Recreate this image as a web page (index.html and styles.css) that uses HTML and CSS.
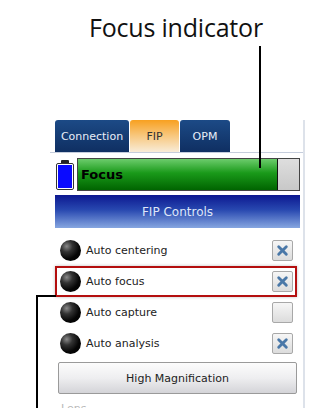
FILE: index.html
```html
<!DOCTYPE html>
<html lang="en">
<head>
    <meta charset="UTF-8">
    <title>Focus indicator</title>
    <link rel="stylesheet" href="styles.css">
</head>
<body>

<div class="page">
    <!-- Callout title -->
    <div class="caption">Focus indicator</div>

    <!-- Callout lines -->
    <div class="lead lead-focus"></div>
    <div class="lead lead-row-h"></div>
    <div class="lead lead-row-v"></div>

    <div class="frame">
        <div class="tabs">
            <div class="tab tab-conn">Connection</div>
            <div class="tab tab-fip active">FIP</div>
            <div class="tab tab-opm">OPM</div>
        </div>

        <div class="status">
            <div class="battery"><div class="battery-fill"></div></div>
            <div class="focus-bar">
                <div class="focus-level">Focus</div>
                <div class="focus-rest"></div>
            </div>
        </div>

        <div class="section-head">FIP Controls</div>

        <div class="controls">
            <div class="row">
                <span class="ball"></span>
                <span class="label">Auto centering</span>
                <span class="check on"><svg viewBox="0 0 20 20"><path d="M6 6L14 14M14 6L6 14"/></svg></span>
            </div>
            <div class="row selected">
                <span class="ball"></span>
                <span class="label">Auto focus</span>
                <span class="check on"><svg viewBox="0 0 20 20"><path d="M6 6L14 14M14 6L6 14"/></svg></span>
            </div>
            <div class="row">
                <span class="ball"></span>
                <span class="label">Auto capture</span>
                <span class="check"></span>
            </div>
            <div class="row">
                <span class="ball"></span>
                <span class="label">Auto analysis</span>
                <span class="check on"><svg viewBox="0 0 20 20"><path d="M6 6L14 14M14 6L6 14"/></svg></span>
            </div>
            <div class="button">High Magnification</div>
            <div class="faded">Lens</div>
        </div>
    </div>
</div>

</body>
</html>
```

FILE: styles.css
```css
body {
    margin: 0;
    background-color: #ffffff;
    overflow: hidden;
}

.page {
    position: relative;
    width: 309px;
    height: 408px;
    overflow: hidden;
}

.caption {
    font-family: 'Open Sans', sans-serif;
    font-size: 25px;
    line-height: 30px;
    color: #111111;
    padding-top: 12px;
    margin-left: 89px;
    height: 108px;
    letter-spacing: -0.2px;
}

/* callout leader lines */
.lead {
    position: absolute;
    background-color: #000000;
    z-index: 5;
}

.lead-focus {
    left: 259px;
    top: 46px;
    width: 2px;
    height: 122px;
}

.lead-row-h {
    left: 36px;
    top: 295px;
    width: 20px;
    height: 2px;
}

.lead-row-v {
    left: 36px;
    top: 295px;
    width: 2px;
    height: 120px;
}

.frame {
    margin-left: 55px;
    width: 245px;
    padding-right: 3px;
    border-right: 2px solid #dde2ea;
    height: 300px;
    font-family: 'DejaVu Sans', Tahoma, sans-serif;
}

.tabs {
    display: flex;
    gap: 1px;
    height: 32px;
    border-bottom: 1px solid #c5cddc;
    margin-left: -5px;
    padding-left: 5px;
    margin-right: -3px;
}

.tab {
    height: 32px;
    display: flex;
    align-items: center;
    justify-content: center;
    border-radius: 3px 3px 0 0;
    background: linear-gradient(#1c4a86, #0f2f62);
    color: #e8eef8;
    font-size: 11px;
    box-sizing: border-box;
}

.tab-conn {
    width: 74px;
}

.tab-fip {
    width: 49px;
}

.tab-opm {
    width: 50px;
}

.tab.active {
    background: linear-gradient(#f8a020, #f8c880 50%, #f8ecd8);
    color: #333333;
}

.status {
    display: flex;
    align-items: center;
    gap: 3px;
    margin-top: 4px;
    height: 34px;
}

.battery {
    position: relative;
    width: 18px;
    height: 27px;
    margin-top: 4px;
    border: 1px solid #333333;
    border-radius: 2px;
    padding: 1px;
    box-sizing: border-box;
    background-color: #ffffff;
    margin-left: 1px;
}

.battery::before {
    content: "";
    position: absolute;
    top: -4px;
    left: 4px;
    width: 8px;
    height: 3px;
    background-color: #222222;
    border-radius: 1px 1px 0 0;
}

.battery-fill {
    width: 100%;
    height: 100%;
    background-color: #0a0aff;
}

.focus-bar {
    flex: 1;
    display: flex;
    height: 33px;
    border: 1px solid #444444;
    box-sizing: border-box;
}

.focus-level {
    flex: 1;
    background: linear-gradient(#6ccc6c, #1a9a1a 45%, #006400);
    border-right: 1px solid #111111;
    font-size: 13px;
    font-weight: bold;
    color: #000000;
    display: flex;
    align-items: center;
    padding-left: 3px;
}

.focus-rest {
    width: 21px;
    background: linear-gradient(#dedede, #c8c8c8);
}

.section-head {
    margin-top: 4px;
    height: 33px;
    background: linear-gradient(#0c1890, #2848b0 45%, #86a6e0);
    color: #dfe6f8;
    font-size: 12px;
    display: flex;
    align-items: center;
    justify-content: center;
}

.controls {
    margin-top: 7px;
    width: 242px;
}

.row {
    display: flex;
    align-items: center;
    height: 31px;
    border: 2px solid transparent;
    box-sizing: border-box;
    padding-left: 3px;
    padding-right: 2px;
}

.row.selected {
    border-color: #b40f0f;
    box-shadow: 0 0 3px rgba(0, 0, 0, 0.25);
}

.ball {
    width: 21px;
    height: 21px;
    border-radius: 50%;
    background: radial-gradient(circle at 32% 30%, #8a8a8a 0, #333333 28%, #050505 62%, #000000);
}

.label {
    flex: 1;
    margin-left: 5px;
    font-size: 11px;
    color: #222222;
}

.check {
    width: 19px;
    height: 19px;
    border: 1px solid #a8a8a8;
    border-radius: 2px;
    background: linear-gradient(#f6f6f6, #dcdcdc);
    display: flex;
}

.check svg {
    width: 19px;
    height: 19px;
}

.check path {
    stroke: #4a78a8;
    stroke-width: 3;
    stroke-linecap: round;
    fill: none;
}

.button {
    margin-top: 3px;
    margin-left: 3px;
    height: 32px;
    box-sizing: border-box;
    border: 1px solid #9a9a9a;
    border-radius: 2px;
    background: linear-gradient(#fcfcfc, #eeeef0 50%, #d4d4d8);
    font-size: 11px;
    color: #222222;
    display: flex;
    align-items: center;
    justify-content: center;
}

.faded {
    margin-top: 8px;
    margin-left: 6px;
    font-size: 11px;
    color: #b8b8b8;
}
```
